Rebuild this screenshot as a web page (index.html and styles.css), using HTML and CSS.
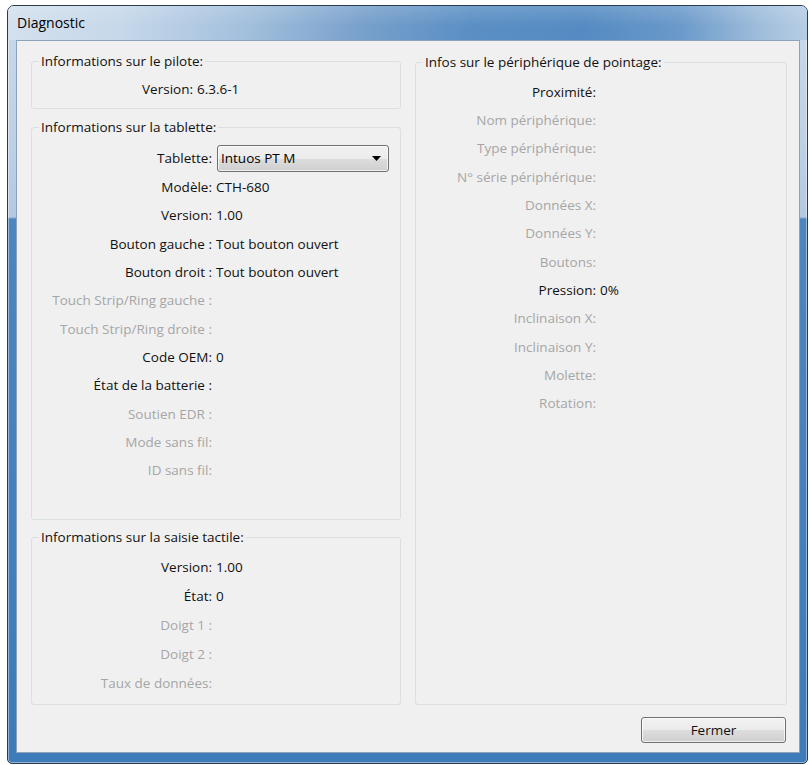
FILE: index.html
```html
<!DOCTYPE html>
<html lang="fr">
<head>
<meta charset="utf-8">
<title>Diagnostic</title>
<link rel="stylesheet" href="styles.css">
</head>
<body>
<div class="window">
  <div class="titlebar">Diagnostic</div>
  <div class="client">
    <div class="columns">
      <div class="col-left">
        <fieldset class="group group-pilot">
          <legend>Informations sur le pilote:</legend>
          <div class="row"><span class="lbl lbl-pilot">Version:</span><span class="val">6.3.6-1</span></div>
        </fieldset>
        <fieldset class="group group-tablet">
          <legend>Informations sur la tablette:</legend>
          <div class="row row-combo"><span class="lbl">Tablette:</span>
            <div class="combo"><span class="combo-text">Intuos PT M</span>
              <svg class="combo-arrow" width="9" height="5" viewBox="0 0 9 5"><polygon points="0,0 9,0 4.5,5" fill="#000"/></svg>
            </div>
          </div>
          <div class="row"><span class="lbl">Modèle:</span><span class="val">CTH-680</span></div>
          <div class="row"><span class="lbl">Version:</span><span class="val">1.00</span></div>
          <div class="row"><span class="lbl">Bouton gauche :</span><span class="val">Tout bouton ouvert</span></div>
          <div class="row"><span class="lbl">Bouton droit :</span><span class="val">Tout bouton ouvert</span></div>
          <div class="row off"><span class="lbl">Touch Strip/Ring gauche :</span></div>
          <div class="row off"><span class="lbl">Touch Strip/Ring droite :</span></div>
          <div class="row"><span class="lbl">Code OEM:</span><span class="val">0</span></div>
          <div class="row"><span class="lbl">État de la batterie :</span></div>
          <div class="row off"><span class="lbl">Soutien EDR :</span></div>
          <div class="row off"><span class="lbl">Mode sans fil:</span></div>
          <div class="row off"><span class="lbl">ID sans fil:</span></div>
        </fieldset>
        <fieldset class="group group-touch">
          <legend>Informations sur la saisie tactile:</legend>
          <div class="row row-t"><span class="lbl">Version:</span><span class="val">1.00</span></div>
          <div class="row row-t"><span class="lbl">État:</span><span class="val">0</span></div>
          <div class="row row-t off"><span class="lbl">Doigt 1 :</span></div>
          <div class="row row-t off"><span class="lbl">Doigt 2 :</span></div>
          <div class="row row-t off"><span class="lbl">Taux de données:</span></div>
        </fieldset>
      </div>
      <fieldset class="group group-pointer">
        <legend>Infos sur le périphérique de pointage:</legend>
        <div class="row"><span class="lbl">Proximité:</span></div>
        <div class="row off"><span class="lbl">Nom périphérique:</span></div>
        <div class="row off"><span class="lbl">Type périphérique:</span></div>
        <div class="row off"><span class="lbl">N° série périphérique:</span></div>
        <div class="row off"><span class="lbl">Données X:</span></div>
        <div class="row off"><span class="lbl">Données Y:</span></div>
        <div class="row off"><span class="lbl">Boutons:</span></div>
        <div class="row"><span class="lbl">Pression:</span><span class="val">0%</span></div>
        <div class="row off"><span class="lbl">Inclinaison X:</span></div>
        <div class="row off"><span class="lbl">Inclinaison Y:</span></div>
        <div class="row off"><span class="lbl">Molette:</span></div>
        <div class="row off"><span class="lbl">Rotation:</span></div>
      </fieldset>
    </div>
    <div class="actions"><button class="btn">Fermer</button></div>
  </div>
</div>
</body>
</html>
```

FILE: styles.css
```css
* { box-sizing: border-box; }
html, body { margin: 0; padding: 0; background: #ffffff; }
body {
  font-family: "Open Sans", "Noto Sans", sans-serif;
  font-size: 13.5px;
  color: #111111;
}
.window {
  margin: 5px 0 0 7px;
  width: 801px;
  height: 759px;
  border: 1px solid #2b3b4e;
  border-radius: 7px 7px 5px 5px;
  display: flex;
  flex-direction: column;
  overflow: hidden;
  background: linear-gradient(to bottom, #c9d9ea 0, #bcd0e5 150px, #b2c9e1 211px, #4c86c0 213px, #4681bd 60%, #3d7bb9 100%);
  box-shadow: inset 0 0 0 1px rgba(255,255,255,0.45);
}
.titlebar {
  height: 34px;
  flex-shrink: 0;
  display: flex;
  align-items: center;
  padding: 0 0 2px 9px;
  font-size: 14px;
  color: #000;
  background:
    linear-gradient(to bottom, rgba(255,255,255,0.15), rgba(255,255,255,0) 60%),
    linear-gradient(90deg, #d3e0ed 0%, #c6d8ea 14%, #a2bfdc 30%, #769fcb 45%, #5a8fc4 58%, #548bc2 72%, #6a99ca 84%, #9fbddb 94%, #b6cde3 100%);
}
.client {
  flex: 1;
  margin: 0 7px 10px 8px;
  border: 1px solid #8ea3b9;
  background: #f0f0f0;
  padding: 12px 12px 9px 14px;
  display: flex;
  flex-direction: column;
}
.columns {
  flex: 1;
  display: grid;
  grid-template-columns: 370px 1fr;
  column-gap: 14px;
  min-height: 0;
}
.col-left {
  display: flex;
  flex-direction: column;
  min-height: 0;
}
.group {
  margin: 0;
  min-width: 0;
  border: 1px solid #d9dfe3;
  border-radius: 3px;
  padding: 0;
}
.group legend {
  margin-left: 7px;
  padding: 0 2px;
  line-height: 16px;
  color: #111111;
}
.group-pilot { padding: 6px 0 5px 0; }
.group-tablet { flex: 1; margin-top: 10px; padding-top: 8.5px; }
.group-touch { margin-top: 9px; padding: 7px 0 7px 0; }
.group-pointer { margin-top: 1px; padding-top: 7.5px; }

.row {
  display: flex;
  align-items: center;
  height: 28.33px;
  white-space: nowrap;
}
.row-t { height: 29px; }
.row-combo { height: 29px; }
.row.off { color: #a6a6a6; }
.lbl {
  width: 180px;
  flex-shrink: 0;
  text-align: right;
}
.lbl-pilot { width: 161px; }
.val { margin-left: 4px; }

.combo {
  margin-left: 5px;
  width: 172px;
  height: 27px;
  border: 1px solid #707070;
  border-radius: 3px;
  background: linear-gradient(to bottom, #f2f2f2 0%, #ebebeb 50%, #dddddd 51%, #cfcfcf 100%);
  box-shadow: inset 0 0 0 1px rgba(255,255,255,0.7);
  display: flex;
  align-items: center;
  padding: 0 7px 0 3px;
  color: #000;
}
.combo-text { flex: 1; }
.combo-arrow { display: block; }

.actions {
  display: flex;
  justify-content: flex-end;
  margin-top: 12px;
  padding-right: 1px;
}
.btn {
  width: 145px;
  height: 26px;
  border: 1px solid #707070;
  border-radius: 3px;
  background: linear-gradient(to bottom, #f2f2f2 0%, #ebebeb 50%, #dddddd 51%, #cfcfcf 100%);
  box-shadow: inset 0 0 0 1px rgba(255,255,255,0.7);
  font-family: "Open Sans", "Noto Sans", sans-serif;
  font-size: 13.5px;
  color: #111111;
  padding: 0;
}
```
